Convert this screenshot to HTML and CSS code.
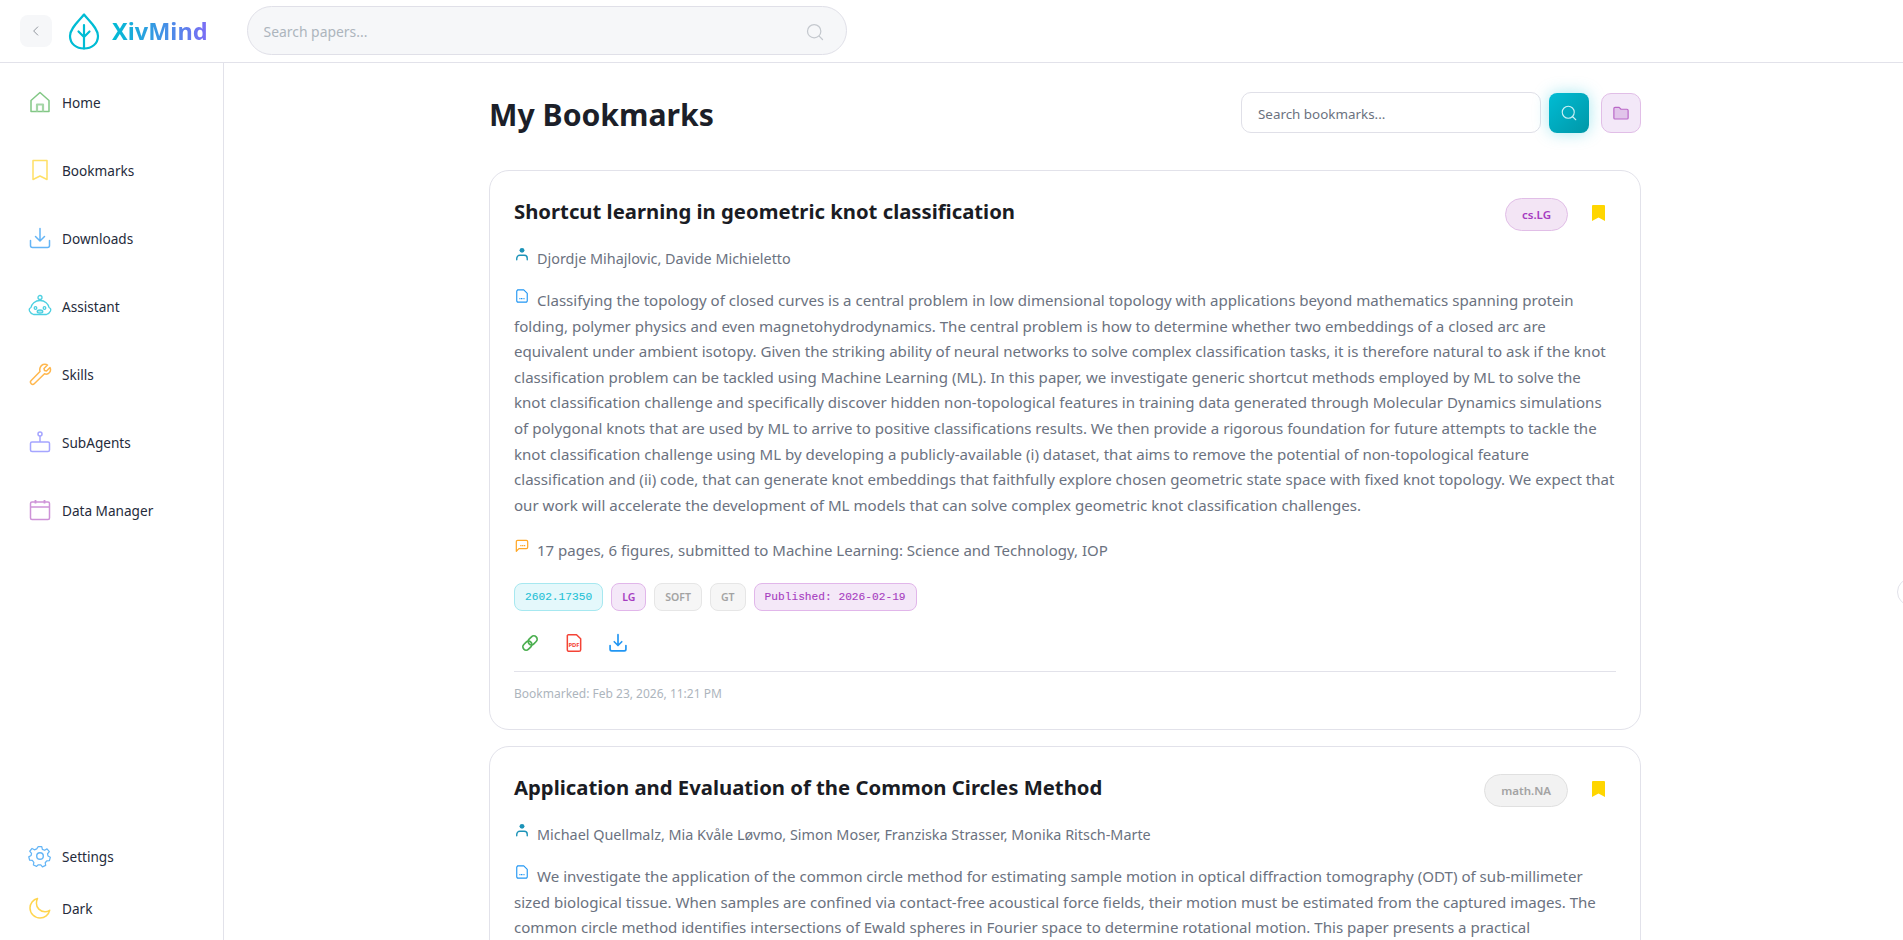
FILE: index.html
```html
<!DOCTYPE html>
<html lang="en">
<head>
<meta charset="utf-8">
<title>XivMind - My Bookmarks</title>
<link rel="stylesheet" href="styles.css">
</head>
<body>
<header class="topbar">
  <button class="back-btn" aria-label="Collapse">
    <svg class="back-icon" viewBox="0 0 24 24" fill="none" stroke="#8a8f98" stroke-width="1.6" stroke-linecap="round" stroke-linejoin="round"><path d="M15 5l-7 7 7 7"/></svg>
  </button>
  <div class="logo">
    <svg class="logo-icon" viewBox="0 0 32 37" fill="none" stroke="#00bcd4" stroke-width="2.2" stroke-linecap="round" stroke-linejoin="round"><path d="M16 1.5C11 8 2 15 2 23c0 8 6.5 12.5 14 12.5S30 31 30 23C30 15 21 8 16 1.5z"/><path d="M16 12v23.5M10.5 18.5L16 24l5.500-5.500"/></svg>
    <span class="logo-text">XivMind</span>
  </div>
  <div class="top-search">
    <span class="top-search-ph">Search papers...</span>
    <svg class="top-search-icon" viewBox="0 0 24 24" fill="none" stroke="#c4c8ce" stroke-width="1.5" stroke-linecap="round"><circle cx="11" cy="11" r="8"/><path d="M17 17l4 4"/></svg>
  </div>
</header>
<div class="shell">
  <nav class="sidebar">
    <ul class="nav-list">
      <li class="nav-item"><svg class="nav-icon" viewBox="0 0 24 24" fill="none" stroke="#81c784" stroke-width="1.500" stroke-linejoin="round"><path d="M12 2.500L3 10.500V21.500H21V10.500z"/><path d="M9 21.500V14.500H15V21.500" stroke-width="2.200" stroke="#a5d6a7"/></svg><span>Home</span></li>
      <li class="nav-item"><svg class="nav-icon" viewBox="0 0 24 24" fill="none" stroke="#ffe066" stroke-width="1.500" stroke-linejoin="round"><path d="M5 2.500H19V21.500L12 18L5 21.500z"/></svg><span>Bookmarks</span></li>
      <li class="nav-item"><svg class="nav-icon" viewBox="0 0 24 24" fill="none" stroke="#64b5f6" stroke-width="1.500" stroke-linecap="round" stroke-linejoin="round"><path d="M12 2.500V14.500M7.500 10.500L12 15L16.500 10.500"/><path d="M2.500 14.500V19.500a2 2 0 0 0 2 2H19.500a2 2 0 0 0 2-2V14.500"/></svg><span>Downloads</span></li>
      <li class="nav-item"><svg class="nav-icon" viewBox="0 0 24 24" fill="none" stroke="#4dd0e1" stroke-width="1.300" stroke-linejoin="round"><circle cx="12" cy="3.500" r="2"/><path d="M12 6.500C7 6.500 3.500 10 3 13.500C1.500 14 .8 15.500 1.500 17 2.200 18.800 3.500 19.800 5.500 20.500H18.500c2-.7 3.300-1.700 4-3.500.7-1.500 0-3-1.500-3.500C20.500 10 17 6.500 12 6.500z"/><circle cx="7.500" cy="14" r="1.300"/><circle cx="16.500" cy="14" r="1.300"/><ellipse cx="12" cy="17.600" rx="2.800" ry="1.600" fill="#b2ebf2"/></svg><span>Assistant</span></li>
      <li class="nav-item"><svg class="nav-icon" viewBox="0 0 24 24" fill="none" stroke="#ffb74d" stroke-width="1.500" stroke-linejoin="round"><path d="M15 2.500c2-.6 3.500-.2 4.500.5L16 6.500l.5 2 2 .5 3.500-3.500c.7 1.500.7 3.500-.5 5-1.300 1.500-3.300 2-5 1.300L6.500 21.500c-1 1-2.500 1-3.300.2-.9-.9-.9-2.300 0-3.200L12 9.500c-.8-2.700.5-6 3-7z"/></svg><span>Skills</span></li>
      <li class="nav-item"><svg class="nav-icon" viewBox="0 0 24 24" fill="none" stroke="#a5a5ff" stroke-width="1.500" stroke-linejoin="round"><circle cx="12" cy="4" r="2"/><path d="M12 6V12"/><rect x="2.500" y="12" width="19" height="9.500" rx="1.500"/></svg><span>SubAgents</span></li>
      <li class="nav-item"><svg class="nav-icon" viewBox="0 0 24 24" fill="none" stroke="#ce93d8" stroke-width="1.500" stroke-linejoin="round"><rect x="2.500" y="4" width="19" height="17.500" rx="1.500"/><path d="M2.500 9H21.500"/><path d="M7.500 2V5.500M16.500 2V5.500" stroke-width="1.800"/></svg><span>Data Manager</span></li>
    </ul>
    <ul class="nav-list nav-bottom">
      <li class="nav-item"><svg class="nav-icon" viewBox="0 0 24 24" fill="none" stroke="#64b5f6" stroke-width="1.400" stroke-linejoin="round"><circle cx="12" cy="12" r="3.300"/><path d="M10 1.500h4l.7 3 2.500 1.100 2.700-1.600 2.600 3.200-2 2.300.5 2.500 2.600 1.500-1 3.800-3 .2-1.700 2.100.5 3-3.600 1.600-1.900-2.300h-2.800L8.200 23.700l-3.600-1.600.5-3-1.700-2.100-3-.2-1-3.800 2.600-1.500.5-2.500-2-2.300L3.100 3.500 5.800 5.100 8.300 4z" transform="translate(1.300 1.300) scale(.89)"/></svg><span>Settings</span></li>
      <li class="nav-item"><svg class="nav-icon" viewBox="0 0 24 24" fill="none" stroke="#ffd54f" stroke-width="1.500" stroke-linejoin="round"><path d="M9.500 2.500C5 3.500 2 7.500 2 12c0 5.500 4.500 10 10 10 4.700 0 8.700-3.200 9.700-7.700-1.500 1-3 1.400-4.700 1.400-5 0-8.600-4-8.600-8.500 0-1.700.2-3.200 1.100-4.700z"/></svg><span>Dark</span></li>
    </ul>
  </nav>
  <main class="main">
    <div class="content">
      <div class="page-head">
        <h1 class="page-title">My Bookmarks</h1>
        <div class="page-tools">
          <div class="bm-search">Search bookmarks...</div>
          <button class="search-btn" aria-label="Search"><svg class="tool-icon" viewBox="0 0 24 24" fill="none" stroke="#c9f1f6" stroke-width="1.500" stroke-linecap="round"><circle cx="11" cy="11" r="8"/><path d="M17 17l4 4"/></svg></button>
          <button class="folder-btn" aria-label="Folders"><svg class="tool-icon" viewBox="0 0 24 24" fill="#e1c4ea" stroke="#ba68c8" stroke-width="1.600" stroke-linejoin="round"><path d="M2.500 6a1.500 1.500 0 0 1 1.500-1.500H9.500L12 7H20a1.500 1.500 0 0 1 1.500 1.500V18.500A1.500 1.500 0 0 1 20 20H4a1.500 1.500 0 0 1-1.500-1.500z"/></svg></button>
        </div>
      </div>

      <article class="card">
        <div class="card-head">
          <h2 class="card-title">Shortcut learning in geometric knot classification</h2>
          <span class="cat cat-purple">cs.LG</span>
          <svg class="mark" viewBox="0 0 13 16"><path d="M0 1a1 1 0 0 1 1-1H12a1 1 0 0 1 1 1V16L6.500 12.500 0 16z"/></svg>
        </div>
        <p class="authors"><svg class="inline-icon" viewBox="0 0 16 16" fill="none" stroke="#1c93b8" stroke-width="1.600" stroke-linecap="round"><circle cx="8" cy="3.800" r="2.800" fill="#1c93b8" stroke="none"/><path d="M2 14.500v-1.500a3.500 3.500 0 0 1 3.500-3.500h5a3.500 3.500 0 0 1 3.500 3.500v1.500"/></svg>Djordje Mihajlovic, Davide Michieletto</p>
        <p class="abstract"><svg class="inline-icon" viewBox="0 0 16 16" fill="none" stroke="#2196f3" stroke-width="1.300" stroke-linejoin="round"><path d="M3 1h7l4 4v8.500a1.500 1.500 0 0 1-1.500 1.500h-9A1.500 1.500 0 0 1 2 13.500V2.500z"/><path d="M5 11h6" stroke-width="1.600" stroke-dasharray="1.200 .6"/></svg>Classifying the topology of closed curves is a central problem in low dimensional topology with applications beyond mathematics spanning protein folding, polymer physics and even magnetohydrodynamics. The central problem is how to determine whether two embeddings of a closed arc are equivalent under ambient isotopy. Given the striking ability of neural networks to solve complex classification tasks, it is therefore natural to ask if the knot classification problem can be tackled using Machine Learning (ML). In this paper, we investigate generic shortcut methods employed by ML to solve the knot classification challenge and specifically discover hidden non-topological features in training data generated through Molecular Dynamics simulations of polygonal knots that are used by ML to arrive to positive classifications results. We then provide a rigorous foundation for future attempts to tackle the knot classification challenge using ML by developing a publicly-available (i) dataset, that aims to remove the potential of non-topological feature classification and (ii) code, that can generate knot embeddings that faithfully explore chosen geometric state space with fixed knot topology. We expect that our work will accelerate the development of ML models that can solve complex geometric knot classification challenges.</p>
        <p class="comment"><svg class="inline-icon" viewBox="0 0 16 16" fill="none" stroke="#ffa726" stroke-width="1.400" stroke-linejoin="round"><path d="M1.500 14V3a1.500 1.500 0 0 1 1.500-1.500H13A1.500 1.500 0 0 1 14.500 3V9.500A1.500 1.500 0 0 1 13 11H4.500z"/><path d="M6 7.500h6" stroke-dasharray="1.500 .6" stroke-width="1.300"/></svg>17 pages, 6 figures, submitted to Machine Learning: Science and Technology, IOP</p>
        <div class="tags">
          <span class="tag tag-mono tag-cyan">2602.17350</span>
          <span class="tag tag-purple">LG</span>
          <span class="tag tag-gray">SOFT</span>
          <span class="tag tag-gray">GT</span>
          <span class="tag tag-mono tag-purple">Published: 2026-02-19</span>
        </div>
        <div class="actions">
          <button class="action" aria-label="Link"><svg viewBox="0 0 24 24" fill="none" stroke="#4caf50" stroke-width="2" stroke-linejoin="round"><g transform="rotate(-45 12 12)"><rect x="1.500" y="8" width="12" height="8" rx="4"/><rect x="10.500" y="8" width="12" height="8" rx="4"/></g></svg></button>
          <button class="action" aria-label="PDF"><svg viewBox="0 0 24 24" fill="none" stroke="#f44336" stroke-width="1.800" stroke-linejoin="round"><path d="M5 2h10l5 5v13a2 2 0 0 1-2 2H6a2 2 0 0 1-2-2V3z"/><text class="pdf-label" x="12" y="16.500" text-anchor="middle">PDF</text></svg></button>
          <button class="action" aria-label="Download"><svg viewBox="0 0 24 24" fill="none" stroke="#2196f3" stroke-width="2" stroke-linecap="round" stroke-linejoin="round"><path d="M12 2V14.500M7.500 10.500L12 15L16.500 10.500"/><path d="M2.500 15V19.500a2 2 0 0 0 2 2H19.500a2 2 0 0 0 2-2V15"/></svg></button>
        </div>
        <div class="card-foot">Bookmarked: Feb 23, 2026, 11:21 PM</div>
      </article>

      <article class="card">
        <div class="card-head">
          <h2 class="card-title">Application and Evaluation of the Common Circles Method</h2>
          <span class="cat cat-gray">math.NA</span>
          <svg class="mark" viewBox="0 0 13 16"><path d="M0 1a1 1 0 0 1 1-1H12a1 1 0 0 1 1 1V16L6.500 12.500 0 16z"/></svg>
        </div>
        <p class="authors"><svg class="inline-icon" viewBox="0 0 16 16" fill="none" stroke="#1c93b8" stroke-width="1.600" stroke-linecap="round"><circle cx="8" cy="3.800" r="2.800" fill="#1c93b8" stroke="none"/><path d="M2 14.500v-1.500a3.500 3.500 0 0 1 3.500-3.500h5a3.500 3.500 0 0 1 3.500 3.500v1.500"/></svg>Michael Quellmalz, Mia Kvåle Løvmo, Simon Moser, Franziska Strasser, Monika Ritsch-Marte</p>
        <p class="abstract"><svg class="inline-icon" viewBox="0 0 16 16" fill="none" stroke="#2196f3" stroke-width="1.300" stroke-linejoin="round"><path d="M3 1h7l4 4v8.500a1.500 1.500 0 0 1-1.500 1.500h-9A1.500 1.500 0 0 1 2 13.500V2.500z"/><path d="M5 11h6" stroke-width="1.600" stroke-dasharray="1.200 .6"/></svg>We investigate the application of the common circle method for estimating sample motion in optical diffraction tomography (ODT) of sub-millimeter sized biological tissue. When samples are confined via contact-free acoustical force fields, their motion must be estimated from the captured images. The common circle method identifies intersections of Ewald spheres in Fourier space to determine rotational motion. This paper presents a practical</p>
      </article>
    </div>
    <button class="edge-btn" aria-label="Open panel"></button>
  </main>
</div>
</body>
</html>
```
FILE: styles.css
```css
* { box-sizing: border-box; }
html, body { margin: 0; height: 100%; overflow: hidden; }
body {
  font-family: "Noto Sans", "Open Sans", sans-serif;
  color: #1f2430;
  background: #fff;
  display: flex;
  flex-direction: column;
}
button { font: inherit; cursor: pointer; padding: 0; }
ul { list-style: none; margin: 0; padding: 0; }
p, h1, h2 { margin: 0; }

.topbar {
  height: 63px;
  flex: none;
  display: flex;
  align-items: center;
  padding-left: 20px;
  border-bottom: 1px solid #e2e2ea;
}
.back-btn {
  width: 32px; height: 32px;
  border: 0; border-radius: 8px;
  background: #f6f7f9;
  display: flex; align-items: center; justify-content: center;
}
.back-icon { width: 14px; height: 14px; }
.logo { display: flex; align-items: center; margin-left: 16px; gap: 12px; }
.logo-icon { width: 32px; height: 37px; }
.logo-text {
  font-size: 23.5px; font-weight: 700; line-height: 1.2;
  background: linear-gradient(90deg, #00bcd4, #7c6cf5);
  -webkit-background-clip: text; background-clip: text;
  color: transparent;
}
.top-search {
  width: 600px; height: 49px;
  margin: -1px 0 0 39px;
  display: flex; align-items: center; justify-content: space-between;
  padding: 2px 21px 0 16px;
  background: #f6f7f9;
  border: 1px solid #e0e0e8;
  border-radius: 25px;
}
.top-search-ph { font-size: 13.9px; color: #adb5bd; }
.top-search-icon { width: 20px; height: 20px; }

.shell { flex: 1; min-height: 0; display: flex; }
.sidebar {
  width: 224px; flex: none;
  border-right: 1px solid #e2e2ea;
  display: flex; flex-direction: column; justify-content: space-between;
  padding: 27px 0 0 28px;
}
.nav-list { display: flex; flex-direction: column; gap: 44px; }
.nav-bottom { gap: 28px; margin-bottom: 20px; }
.nav-item { display: flex; align-items: center; gap: 10px; height: 24px; font-size: 13.6px; color: #252b3b; }
.nav-icon { width: 24px; height: 24px; flex: none; }

.main { flex: 1; min-width: 0; position: relative; overflow: hidden; padding: 29px 0 0 265px; }
.content { width: 1152px; display: flex; flex-direction: column; gap: 16px; }
.page-head { display: flex; align-items: flex-start; justify-content: space-between; height: 62px; }
.page-title { font-size: 30.2px; font-weight: 700; color: #1c1f29; line-height: 36px; margin-top: 5px; }
.page-tools { display: flex; align-items: center; }
.bm-search {
  width: 300px; height: 41px;
  display: flex; align-items: center;
  padding: 2px 0 0 16px;
  font-size: 13.4px; color: #6b7280;
  border: 1px solid #e0e0e8; border-radius: 10px;
}
.search-btn {
  width: 40px; height: 40px; margin-left: 8px;
  border: 0; border-radius: 8px;
  background: linear-gradient(135deg, #00bcd4, #0097a7);
  box-shadow: 0 0 16px rgba(0, 188, 212, .35);
  display: flex; align-items: center; justify-content: center;
}
.folder-btn {
  width: 40px; height: 40px; margin-left: 12px;
  border: 1px solid #e1bee7; border-radius: 10px;
  background: #f3e8f8;
  display: flex; align-items: center; justify-content: center;
}
.tool-icon { width: 18px; height: 18px; }

.card {
  border: 1px solid #e2e2ea;
  border-radius: 20px;
  padding: 24px;
  background: #fff;
  flex: none;
}
.card-head { display: flex; align-items: flex-start; height: 36px; }
.card-title { flex: 1; font-size: 20.3px; font-weight: 700; color: #1a1c24; line-height: 32px; }
.cat {
  height: 33px; padding: 0 16px; margin-top: 3px;
  display: flex; align-items: center;
  font-size: 11.5px; font-weight: 600;
  border-radius: 17px;
}
.cat-purple { background: #f3e5f5; border: 1px solid #e1bee7; color: #a63cc0; }
.cat-gray { background: #f2f2f2; border: 1px solid #e0e0e0; color: #a3a3a3; }
.mark { width: 13px; height: 16px; margin: 10px 11px 0 24px; fill: #ffd600; }

.inline-icon { width: 14px; height: 14px; vertical-align: 3px; margin: 0 8px 0 1px; }
.authors { margin-top: 16px; font-size: 14.4px; line-height: 22px; color: #6b7280; }
.abstract { margin-top: 18px; font-size: 15.08px; line-height: 25.6px; color: #6b7280; }
.comment { margin-top: 20px; font-size: 15px; line-height: 25.6px; color: #6b7280; }
.tags { display: flex; gap: 8px; margin-top: 19px; }
.tag {
  height: 28px; padding: 0 10px;
  display: flex; align-items: center;
  font-size: 10.5px; font-weight: 600;
  border-radius: 8px; border: 1px solid;
}
.tag-mono { font-family: "Liberation Mono", monospace; font-size: 11.2px; font-weight: 400; padding: 0 10px; -webkit-text-stroke: .1px; }
.tag-cyan { background: #e4f8fb; border-color: #a6e8f0; color: #1fc1d6; }
.tag-purple { background: #f4e8f8; border-color: #e1b6ea; color: #a63cc0; }
.tag-gray { background: #f6f6f6; border-color: #e6e6e6; color: #a3a3a3; }
.actions { display: flex; gap: 8px; margin: 14px 0 0 -2px; }
.action {
  width: 36px; height: 36px;
  border: 0; background: none;
  display: flex; align-items: center; justify-content: center;
}
.action svg { width: 20px; height: 20px; }
.pdf-label { font-size: 7px; font-weight: 700; fill: #f44336; stroke: none; }
.card-foot {
  margin-top: 10px; padding-top: 11px;
  border-top: 1px solid #e2e2ea;
  font-size: 12px; line-height: 22px; color: #adb5bd;
}
.edge-btn {
  position: absolute; right: -22px; top: 515px;
  width: 28px; height: 28px;
  border-radius: 50%;
  border: 1px solid #e2e2ea;
  background: #fff;
}
```
